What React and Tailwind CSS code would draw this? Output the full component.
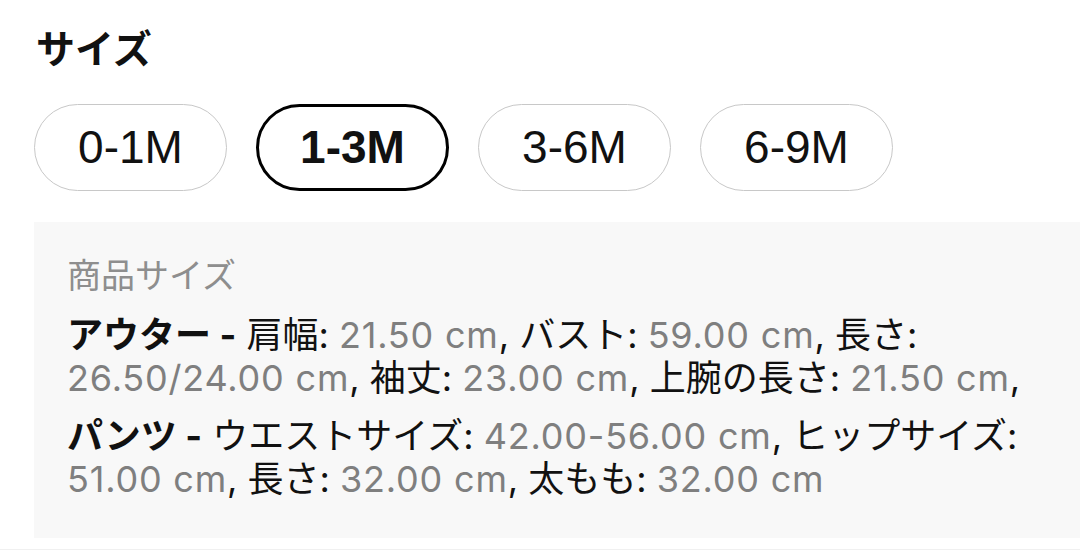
import React from "react";

const sizes = [
  { label: "0-1M", selected: false },
  { label: "1-3M", selected: true },
  { label: "3-6M", selected: false },
  { label: "6-9M", selected: false },
];

function V({ children }) {
  return <span className="text-[#7f7f7f] tracking-[0.8px]">{children}</span>;
}

export default function App() {
  return (
    <div className="w-[1080px] h-[552px] overflow-hidden bg-white text-[#111] font-['Inter','Noto_Sans_CJK_JP',sans-serif]">
      <div className="pl-[36px] pt-[27px]">
        <h2 className="text-[39px] font-bold leading-[39px] font-['Noto_Sans_CJK_JP',sans-serif]">サイズ</h2>
      </div>
      <div className="flex gap-[29px] pl-[34px] mt-[38px]">
        {sizes.map((s) => (
          <div
            key={s.label}
            className={
              s.selected
                ? "w-[193px] h-[87px] rounded-full border-[3px] border-black flex items-center justify-center text-[46px] font-bold font-['Liberation_Sans',sans-serif]"
                : "w-[193px] h-[87px] rounded-full border-[1.5px] border-[#c8c8c8] flex items-center justify-center text-[46px] font-['Liberation_Sans',sans-serif]"
            }
          >
            {s.label}
          </div>
        ))}
      </div>
      <div className="ml-[34px] mt-[31px] h-[316px] bg-[#f8f8f8] pl-[33px] pt-[32px]">
        <div className="text-[34px] leading-[43px] text-[#8e8e8e]">商品サイズ</div>
        <p className="mt-[17px] text-[36px] leading-[43px] whitespace-nowrap">
          <b className="font-bold">アウター -</b> 肩幅: <V>21.50 cm</V>, バスト: <V>59.00 cm</V>, 長さ:
          <br />
          <V>26.50/24.00 cm</V>, 袖丈: <V>23.00 cm</V>, 上腕の長さ: <V>21.50 cm</V>,
        </p>
        <p className="mt-[15px] text-[36px] leading-[43px] whitespace-nowrap">
          <b className="font-bold">パンツ -</b> ウエストサイズ: <V>42.00-56.00 cm</V>, ヒップサイズ:
          <br />
          <V>51.00 cm</V>, 長さ: <V>32.00 cm</V>, 太もも: <V>32.00 cm</V>
        </p>
      </div>
      <div className="mt-[11px] h-px bg-[#f0f0f0]" />
    </div>
  );
}
